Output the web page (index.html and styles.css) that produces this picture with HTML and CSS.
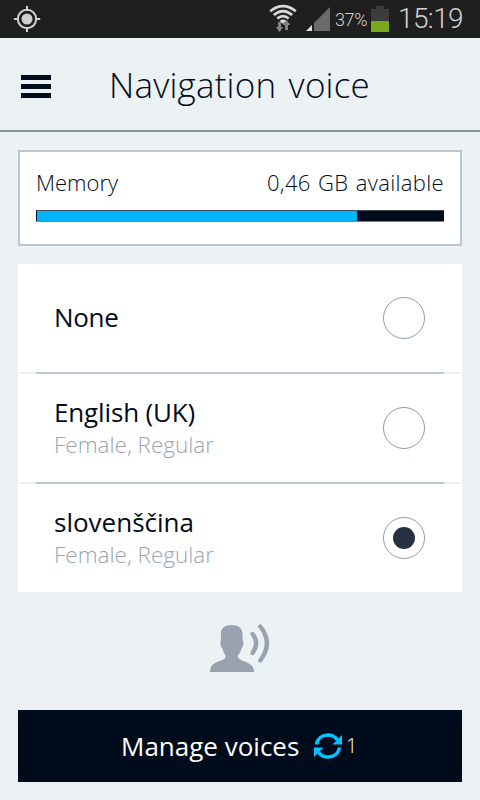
FILE: index.html
```html
<!DOCTYPE html>
<html lang="en">
<head>
<meta charset="utf-8">
<title>Navigation voice</title>
<link rel="stylesheet" href="styles.css">
</head>
<body>
<div class="status">
  <svg class="gps" width="28" height="28" viewBox="0 0 28 28"><g fill="none" stroke="#d0d0d0" stroke-width="2"><circle cx="14" cy="14" r="9.2"/><path d="M14 1v5M14 22v5M.8 14H6M22 14h5.2"/></g><circle cx="14" cy="14" r="5.5" fill="#d0d0d0"/></svg>
  <svg class="wifi" width="28" height="30" viewBox="0 0 28 30"><g fill="none" stroke="#d8d8d8" stroke-width="2.6"><path d="M1.2 7.2Q14 -2.8 26.8 7.2"/><path d="M4.8 11.1Q14 3.2 23.2 11.1"/><path d="M8.3 14.6Q14 9.6 19.7 14.6"/></g><path d="M10.6 16.8Q14 14 17.4 16.8L14 20z" fill="#d8d8d8"/><path d="M9 18h3v5h2.300L10.500 28 6.700 23H9z M16 26v-5h-2.300L17.500 16l3.800 5H19v5z" fill="#858585"/></svg>
  <svg class="signal" width="24" height="24" viewBox="0 0 24 24"><path d="M8 16L24 0v24H8z" fill="#6b6b6b"/><path d="M0 24l6-6v6z" fill="#e0e0e0"/></svg>
  <span class="percent">37%</span>
  <svg class="battery" width="18" height="26" viewBox="0 0 18 26"><path d="M5 0h8v3h5v12H0V3h5z" fill="#3c3c3c"/><path d="M0 15h18v11H0z" fill="#7aa81a"/></svg>
  <span class="clock">15:19</span>
</div>
<header class="header">
  <div class="menu"><i></i><i></i><i></i></div>
  <h1>Navigation voice</h1>
</header>
<main class="content">
  <section class="memory">
    <div class="memory-text"><span class="mem-label">Memory</span><span class="mem-value">0,46 GB available</span></div>
    <div class="bar"><div class="fill"></div></div>
  </section>
  <section class="list">
    <div class="row"><div><div class="name none">None</div></div><span class="radio"></span></div>
    <div class="divider"></div>
    <div class="row"><div class="pair"><div class="name english">English (UK)</div><div class="sub">Female, Regular</div></div><span class="radio"></span></div>
    <div class="divider"></div>
    <div class="row"><div class="pair"><div class="name sloven">slovenščina</div><div class="sub">Female, Regular</div></div><span class="radio checked"></span></div>
  </section>
  <svg class="speaker" width="62" height="50" viewBox="0 0 62 50"><path d="M0 48C0 41 4 39 11 36.500C15 35 16 33.500 15.500 31C13.800 29 12.800 27 12.300 24C10.800 24 9.500 18 10.800 17L11 10C11 4 15 1 21.500 1S32.500 4 32.500 10L32.700 17C34.500 18 33 24 31.500 24C31 27 30 29 28 31C27.500 33.500 29 35 32 36.500C39 39 44 41 44 48z" fill="#99a3b0"/><g fill="none" stroke="#99a3b0" stroke-width="4.400" stroke-linecap="round"><path d="M42.600 10Q49.600 19 42.600 29"/><path d="M50.300 2.500Q63.500 19 50.300 36.500"/></g></svg>
  <div class="manage"><span class="manage-label">Manage voices</span><svg class="sync" width="28" height="26" viewBox="0 0 28 26"><g fill="none" stroke="#00c3ff" stroke-width="3.500"><path d="M2.500 11.500C3.500 5 8.500 1.900 14 1.900C18.500 1.900 21.500 4 23.500 7"/><path d="M25.500 14.500C24.500 21 19.500 24.100 14 24.100C9.500 24.100 6.500 22 4.500 19"/></g><path d="M28 2v9.500H18.500zM0 24v-9.500h9.500z" fill="#00c3ff"/></svg><span class="count">1</span></div>
</main>
</body>
</html>
```
FILE: styles.css
```css
* { box-sizing: border-box; }
body { margin: 0; width: 480px; height: 800px; overflow: hidden; background: #ecf1f4; color: #000b1c; font-family: "Open Sans", "Noto Sans", sans-serif; font-weight: 300; }
svg { display: block; flex: none; }
.status { height: 38px; background: #1f1f1f; color: #d2d2d2; display: flex; align-items: flex-start; font-family: Roboto, sans-serif; font-weight: 400; white-space: nowrap; }
.gps { margin: 5px 0 0 13px; }
.wifi { margin: 4px 0 0 228px; }
.signal { margin: 7px 0 0 9px; }
.percent { width: 36px; margin: 9px 0 0 5px; font-size: 18px; line-height: 22px; letter-spacing: -.4px; font-weight: 350; }
.battery { margin: 6px 0 0 0; }
.clock { margin: 1px 0 0 9px; font-size: 28px; line-height: 36px; letter-spacing: -.6px; font-weight: 350; }
.header { height: 94px; border-bottom: 2px solid #8b959f; display: flex; }
.menu { width: 30px; margin: 37px 0 0 21px; display: flex; flex-direction: column; gap: 4px; }
.menu i { height: 5px; background: #000b1c; }
h1 { margin: 23px 0 0 58px; font-size: 35px; line-height: 48px; font-weight: 300; letter-spacing: .2px; word-spacing: 3px; white-space: nowrap; }
.content { padding: 18px 18px 0; }
.memory { height: 96px; border: 2px solid #bdc7d1; background: #fff; padding: 15px 16px 16px; }
.memory-text { display: flex; justify-content: space-between; font-size: 22px; line-height: 30px; white-space: nowrap; }
.mem-value { letter-spacing: .35px; word-spacing: 1.2px; }
.bar { height: 12px; margin-top: 13px; background: #000b1c; border-bottom: 1px solid #7a8088; border-top: 1px solid #444d57; padding: 0 0 0 1px; }
.fill { width: 320px; height: 10px; background: #00b4ff; }
.list { margin-top: 18px; }
.row { height: 108px; padding: 0 37px 0 36px; background: #fff; display: flex; align-items: center; justify-content: space-between; }
.divider { height: 2px; margin: 0 18px; background: #bdc7d1; }
.name { font-size: 26px; line-height: 36px; font-weight: 370; white-space: nowrap; }
.none { padding-bottom: 2px; letter-spacing: -.3px; }
.english { letter-spacing: -.15px; }
.pair { padding-bottom: 3px; }
.sub { font-size: 22.500px; line-height: 29px; color: #9aa4b1; white-space: nowrap; }
.radio { width: 42px; height: 42px; border: 1.500px solid #929dab; border-radius: 50%; display: flex; align-items: center; justify-content: center; }
.checked::after { content: ""; width: 22px; height: 22px; border-radius: 50%; background: #263040; }
.speaker { margin: 32px 0 0 192px; }
.manage { height: 72px; margin-top: 36px; background: #000b1c; color: #fff; display: flex; align-items: center; padding-left: 103px; }
.manage-label { width: 193px; padding-bottom: 1px; font-size: 26px; line-height: 36px; white-space: nowrap; font-weight: 370; }
.count { margin-left: 4px; padding-bottom: 1px; font-size: 20px; }
```
